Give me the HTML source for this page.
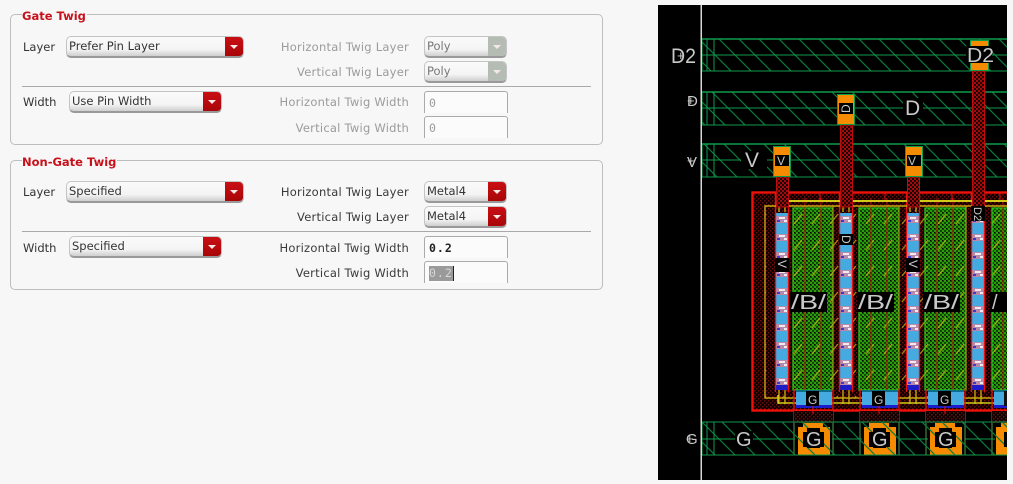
<!DOCTYPE html>
<html><head><meta charset="utf-8">
<style>
html,body{margin:0;padding:0;width:1013px;height:484px;overflow:hidden;background:#f7f7f7;}
body{position:relative;font-family:"DejaVu Sans","Liberation Sans",sans-serif;font-size:11.5px;color:#333;}
.ui{position:absolute;left:0;top:0;width:640px;height:484px;filter:blur(.35px);overflow:hidden;}
.grp{position:absolute;left:10px;width:591px;border:1px solid #bdbdbd;border-radius:5px;box-sizing:content-box;}
.ttl{position:absolute;left:22px;font-weight:bold;color:#c8101a;background:#f7f7f7;line-height:14px;font-size:11.5px;padding-right:1px;}
.sep{position:absolute;left:22px;width:569px;height:1px;background:#a9a9a9;}
.l{position:absolute;line-height:14px;white-space:nowrap;color:#333;}
.r{position:absolute;right:231px;line-height:14px;white-space:nowrap;color:#3a3a3a;letter-spacing:.24px;}
.d{color:#9b9b9b;}
.c{position:absolute;height:19px;border:1px solid #c4c4c4;border-bottom:2px solid #999;border-radius:5px;background:linear-gradient(#fafafa 0,#f4f4f4 65%,#cfcfcf 100%);box-sizing:content-box;overflow:hidden;line-height:19px;padding-left:2px;color:#333;white-space:nowrap;}
.c i{position:absolute;right:0;top:0;bottom:0;width:18px;background:linear-gradient(#c90f14,#a80608);}
.c i:after{content:"";position:absolute;left:5px;top:8px;border:4px solid transparent;border-top:4px solid #f5e8e8;border-bottom:0;}
.c.dis{color:#777;}
.c.dis i{background:#b4bcb4;}
.t{position:absolute;left:424px;width:84px;height:22px;border:1px solid #aaa;border-bottom:0;border-radius:3px 3px 0 0;background:#fbfbfb;box-sizing:border-box;font-family:"DejaVu Sans Mono","Liberation Mono",monospace;font-size:11.5px;line-height:22px;padding-left:4px;}
.sel{background:#9a9a9a;color:#d8d8d8;display:inline-block;line-height:15px;height:15px;border-right:1px solid #222;}
svg{position:absolute;left:658px;top:5px;}
svg text{font-family:"Liberation Sans",sans-serif;fill:#c9c9c9;}
</style></head><body>
<div class="ui">
<div class="grp" style="top:14px;height:129px"></div>
<div class="ttl" style="top:9px">Gate Twig</div>
<div class="l" style="left:23px;top:40px">Layer</div>
<div class="c" style="left:66px;top:36px;width:174px">Prefer Pin Layer<i></i></div>
<div class="r d" style="top:40px">Horizontal Twig Layer</div>
<div class="c dis" style="left:424px;top:36px;width:79px">Poly<i></i></div>
<div class="r d" style="top:65px">Vertical Twig Layer</div>
<div class="c dis" style="left:424px;top:61px;width:79px">Poly<i></i></div>
<div class="sep" style="top:86px"></div>
<div class="l" style="left:23px;top:95px">Width</div>
<div class="c" style="left:69px;top:91px;width:149px">Use Pin Width<i></i></div>
<div class="r d" style="top:95px">Horizontal Twig Width</div>
<div class="t d" style="top:91px">0</div>
<div class="r d" style="top:121px">Vertical Twig Width</div>
<div class="t d" style="top:116px">0</div>

<div class="grp" style="top:160px;height:128px"></div>
<div class="ttl" style="top:155px">Non-Gate Twig</div>
<div class="l" style="left:23px;top:185px">Layer</div>
<div class="c" style="left:66px;top:181px;width:174px">Specified<i></i></div>
<div class="r" style="top:185px">Horizontal Twig Layer</div>
<div class="c" style="left:424px;top:181px;width:79px">Metal4<i></i></div>
<div class="r" style="top:210px">Vertical Twig Layer</div>
<div class="c" style="left:424px;top:206px;width:79px">Metal4<i></i></div>
<div class="sep" style="top:231px"></div>
<div class="l" style="left:23px;top:241px">Width</div>
<div class="c" style="left:69px;top:236px;width:149px">Specified<i></i></div>
<div class="r" style="top:241px">Horizontal Twig Width</div>
<div class="t" style="top:236px;font-weight:bold;color:#222;letter-spacing:1px">0.2</div>
<div class="r" style="top:266px">Vertical Twig Width</div>
<div class="t" style="top:261px;letter-spacing:1px"><span class="sel">0.2</span></div>
</div>

<svg width="349" height="475" viewBox="658 5 349 475">
<defs>
<pattern id="h" width="20" height="20" patternUnits="userSpaceOnUse"><path d="M0 0L20 20M-10 10L10 30M10 -10L30 10" stroke="#0a7a3c" stroke-width="1.2" fill="none"/></pattern>
<pattern id="ck" width="4" height="4" patternUnits="userSpaceOnUse"><rect width="4" height="4" fill="#0a4a03"/><rect width="2" height="2" fill="#2f9a0a"/><rect x="2" y="2" width="2" height="2" fill="#2f9a0a"/><rect x="2" width="1" height="1" fill="#000"/></pattern>
<pattern id="rd" width="4" height="4" patternUnits="userSpaceOnUse"><rect width="4" height="4" fill="#0c0000"/><rect width="1.5" height="1.5" fill="#6a0e0e"/><rect x="2" y="2" width="1.5" height="1.5" fill="#6a0e0e"/></pattern>
<pattern id="v" width="4" height="4" patternUnits="userSpaceOnUse"><rect width="4" height="4" fill="#200202"/><rect width="2" height="2" fill="#a00b0b"/><rect x="2" y="2" width="2" height="2" fill="#a00b0b"/></pattern>
<pattern id="y" width="18" height="26" patternUnits="userSpaceOnUse"><path d="M2 16L10 6" stroke="#c8b80c" stroke-width="1.3" opacity=".75"/></pattern>
<pattern id="fb" x="0" y="216" width="18" height="18" patternUnits="userSpaceOnUse"><rect width="18" height="18" fill="#45aadf"/><rect y="0" width="18" height="7" fill="#b68aa8"/><rect x="6" y="1" width="6" height="2" fill="#f2e8f0"/><rect x="4" y="4" width="3" height="2" fill="#3a3ad0"/><rect x="11" y="4" width="3" height="2" fill="#f2e8f0"/></pattern>
<g id="fin">
 <rect x="-7" y="213" width="14" height="172" fill="url(#fb)" transform="translate(-9 0)" style="transform-box:fill-box" opacity="0"/>
 <g transform="translate(-9 0)"><rect x="2" y="213" width="14" height="172" fill="url(#fb)"/></g>
 <rect x="-6" y="385" width="12" height="5" fill="#1c1cc8"/>
 <path d="M-6.500 192V392M6.500 192V392" stroke="#e81010" stroke-width="1.3"/>
 <path d="M-3 192V212M3 192V212M-3 390V404M3 390V404" stroke="#d8c80e" stroke-width="1.2"/>
</g>
<g id="sd">
 <path d="M-19 389V455M20 389V455" stroke="#e81010" stroke-width="1.3"/>
 <rect x="-17" y="390" width="36" height="18" fill="#45aadf"/>
 <rect x="-17" y="390" width="36" height="2" fill="#0e6e8a"/>
 <rect x="-17" y="405" width="36" height="3" fill="#1c1cc8"/>
 <rect x="-7" y="391" width="13" height="15" fill="#111"/>
 <path d="M-19 411H20V423H-19Z" fill="url(#rd)"/>
 <path d="M0 404V414" stroke="#e81010"/>
 <path d="M-10 423H10V427H17V455H-15V427H-10Z" fill="#f58b00"/>
 <path d="M-19 423V455M20 423V455" stroke="#0d9a4a" stroke-width="1"/>
</g>
</defs>
<rect x="658" y="5" width="349" height="475" fill="#000"/>

<!-- bars -->
<g stroke="#0f9a4a" fill="none">
 <rect x="702" y="39" width="306" height="32" fill="url(#h)"/>
 <rect x="702" y="92" width="306" height="33" fill="url(#h)"/>
 <rect x="702" y="144" width="306" height="33" fill="url(#h)"/>
 <path d="M702 55H1007M702 108H1007M702 160H1007" stroke-width="1"/>
 <path d="M707 39V71M714 39V71M707 92V125M714 92V125M707 144V177M714 144V177" stroke-width="1"/>
 <path d="M702 39H1007M702 92H1007M702 144H1007" stroke-width="1.5"/>
</g>

<!-- transistor -->
<rect x="752" y="192" width="256" height="218" fill="url(#rd)"/>
<g>
 <rect x="793" y="208" width="40" height="182" fill="url(#ck)"/>
 <rect x="859" y="208" width="40" height="182" fill="url(#ck)"/>
 <rect x="925" y="208" width="41" height="182" fill="url(#ck)"/>
 <rect x="992" y="208" width="16" height="182" fill="url(#ck)"/>
 <rect x="765" y="205" width="243" height="193" fill="url(#y)"/>
 <g fill="none" stroke="#1fd01f" stroke-width="1.2">
  <rect x="793" y="208" width="40" height="182"/><rect x="859" y="208" width="40" height="182"/><rect x="925" y="208" width="41" height="182"/><rect x="992" y="208" width="18" height="182"/>
 </g>
 <path d="M805 198V392M821 198V392M871 198V392M887 198V392M937 198V392M953 198V392M1003 198V392" stroke="#b8180a" stroke-width="1"/>
</g>
<use href="#fin" x="782"/><use href="#fin" x="846"/><use href="#fin" x="913"/><use href="#fin" x="978"/>
<g fill="none">
 <path d="M1007 201H778" stroke="#d2c818" stroke-width="2"/>
 <path d="M1007 206H765V398H1007" stroke="#c8a80e" stroke-width="1.4"/>
 <path d="M778 395V403H1007" stroke="#d2c818" stroke-width="1.6"/>
 <path d="M833 206V390M899 206V390M966 206V390" stroke="#b8a010" stroke-width="1"/>
</g>
<rect x="752.500" y="192.500" width="256" height="218" fill="none" stroke="#f01208" stroke-width="2.400"/>
<path d="M820 192V200M885 192V200M952 192V200M1000 192V200" stroke="#e81010"/>

<use href="#sd" x="813"/><use href="#sd" x="879"/><use href="#sd" x="945"/><use href="#sd" x="1011"/>

<!-- G rail drawn over contacts -->
<g stroke="#0f9a4a" fill="none">
 <rect x="702" y="422" width="306" height="33" fill="url(#h)"/>
 <path d="M702 439H795M832 439H862M899 439H928M965 439H995" stroke-width="1"/>
 <path d="M707 422V455M714 422V455" stroke-width="1"/>
</g>
<g fill="#000">
 <rect x="807" y="428" width="13" height="20"/><rect x="803" y="432" width="21" height="15"/>
 <rect x="873" y="428" width="13" height="20"/><rect x="869" y="432" width="21" height="15"/>
 <rect x="939" y="428" width="13" height="20"/><rect x="935" y="432" width="21" height="15"/>
 <rect x="1004" y="432" width="4" height="15"/>
 <rect x="806" y="402" width="0" height="0"/>
 <rect x="806" y="391" width="13" height="15"/><rect x="872" y="391" width="13" height="15"/><rect x="938" y="391" width="13" height="15"/>
</g>

<!-- vias down -->
<g fill="url(#v)" stroke="#c00c0c" stroke-width="1">
 <rect x="776.500" y="177" width="12" height="30"/>
 <rect x="840.500" y="125" width="12" height="82"/>
 <rect x="907.500" y="177" width="12" height="30"/>
 <rect x="972.500" y="71" width="12" height="136"/>
</g>
<!-- contacts -->
<g fill="#f58b00" stroke="#0f9a4a">
 <rect x="773.500" y="146.500" width="17" height="30"/>
 <rect x="837.500" y="94.500" width="17" height="30"/>
 <rect x="905.500" y="146.500" width="17" height="30"/>
 <rect x="970.500" y="40.500" width="18" height="30"/>
</g>
<g fill="#000">
 <rect x="775" y="155" width="14" height="11"/><rect x="839" y="103" width="14" height="11"/><rect x="907" y="155" width="14" height="11"/><rect x="966" y="46" width="26" height="17"/>
 <rect x="741" y="151" width="26" height="18"/><rect x="903" y="98" width="20" height="20"/>
 <rect x="735" y="431" width="18" height="16"/>
 <rect x="790" y="292" width="37" height="20"/><rect x="857" y="292" width="37" height="20"/><rect x="923" y="292" width="37" height="20"/><rect x="990" y="292" width="18" height="20"/>
 <rect x="775" y="258" width="14" height="14"/><rect x="839" y="234" width="14" height="11"/><rect x="906" y="258" width="14" height="14"/><rect x="971" y="206" width="14" height="15"/>
</g>
<!-- labels -->
<g>
 <text x="671" y="63" style="font-size:21px" textLength="25" lengthAdjust="spacingAndGlyphs">D2</text>
 <text x="677" y="60" style="font-size:13px">+</text>
 <text x="687" y="106" style="font-size:15px">D</text>
 <text x="687" y="105" style="font-size:13px">+</text>
 <text x="687" y="167" style="font-size:15px">V</text>
 <text x="687" y="165" style="font-size:13px">+</text>
 <text x="686" y="444" style="font-size:15px">G</text>
 <text x="686" y="443" style="font-size:13px">+</text>
 <text x="967" y="62" style="font-size:20px" textLength="27" lengthAdjust="spacingAndGlyphs">D2</text>
 <text x="905" y="115" style="font-size:21px">D</text>
 <text x="745" y="167" style="font-size:21px">V</text>
 <text x="736" y="446" style="font-size:20px">G</text>
 <text x="777" y="165" style="font-size:12px">V</text>
 <text x="908" y="165" style="font-size:12px">V</text>
 <text transform="translate(850,113) rotate(-90)" style="font-size:12px">D</text>
 <text transform="translate(778,260) rotate(90)" style="font-size:12px">V</text>
 <text transform="translate(909,260) rotate(90)" style="font-size:12px">V</text>
 <text transform="translate(842,235) rotate(90)" style="font-size:12px">D</text>
 <text transform="translate(974,207) rotate(90)" style="font-size:11px">D2</text>
 <text x="791" y="309" style="font-size:20px" textLength="35" lengthAdjust="spacingAndGlyphs">/B/</text>
 <text x="858" y="309" style="font-size:20px" textLength="35" lengthAdjust="spacingAndGlyphs">/B/</text>
 <text x="924" y="309" style="font-size:20px" textLength="35" lengthAdjust="spacingAndGlyphs">/B/</text>
 <text x="992" y="309" style="font-size:20px">/</text>
 <text x="808" y="404" style="font-size:12px">G</text>
 <text x="874" y="404" style="font-size:12px">G</text>
 <text x="940" y="404" style="font-size:12px">G</text>
 <text x="806" y="446" style="font-size:20px">G</text>
 <text x="872" y="446" style="font-size:20px">G</text>
 <text x="938" y="446" style="font-size:20px">G</text>
</g>
<rect x="700.500" y="5" width="1.500" height="475" fill="#d9d9d9"/>
</svg>
</body></html>
